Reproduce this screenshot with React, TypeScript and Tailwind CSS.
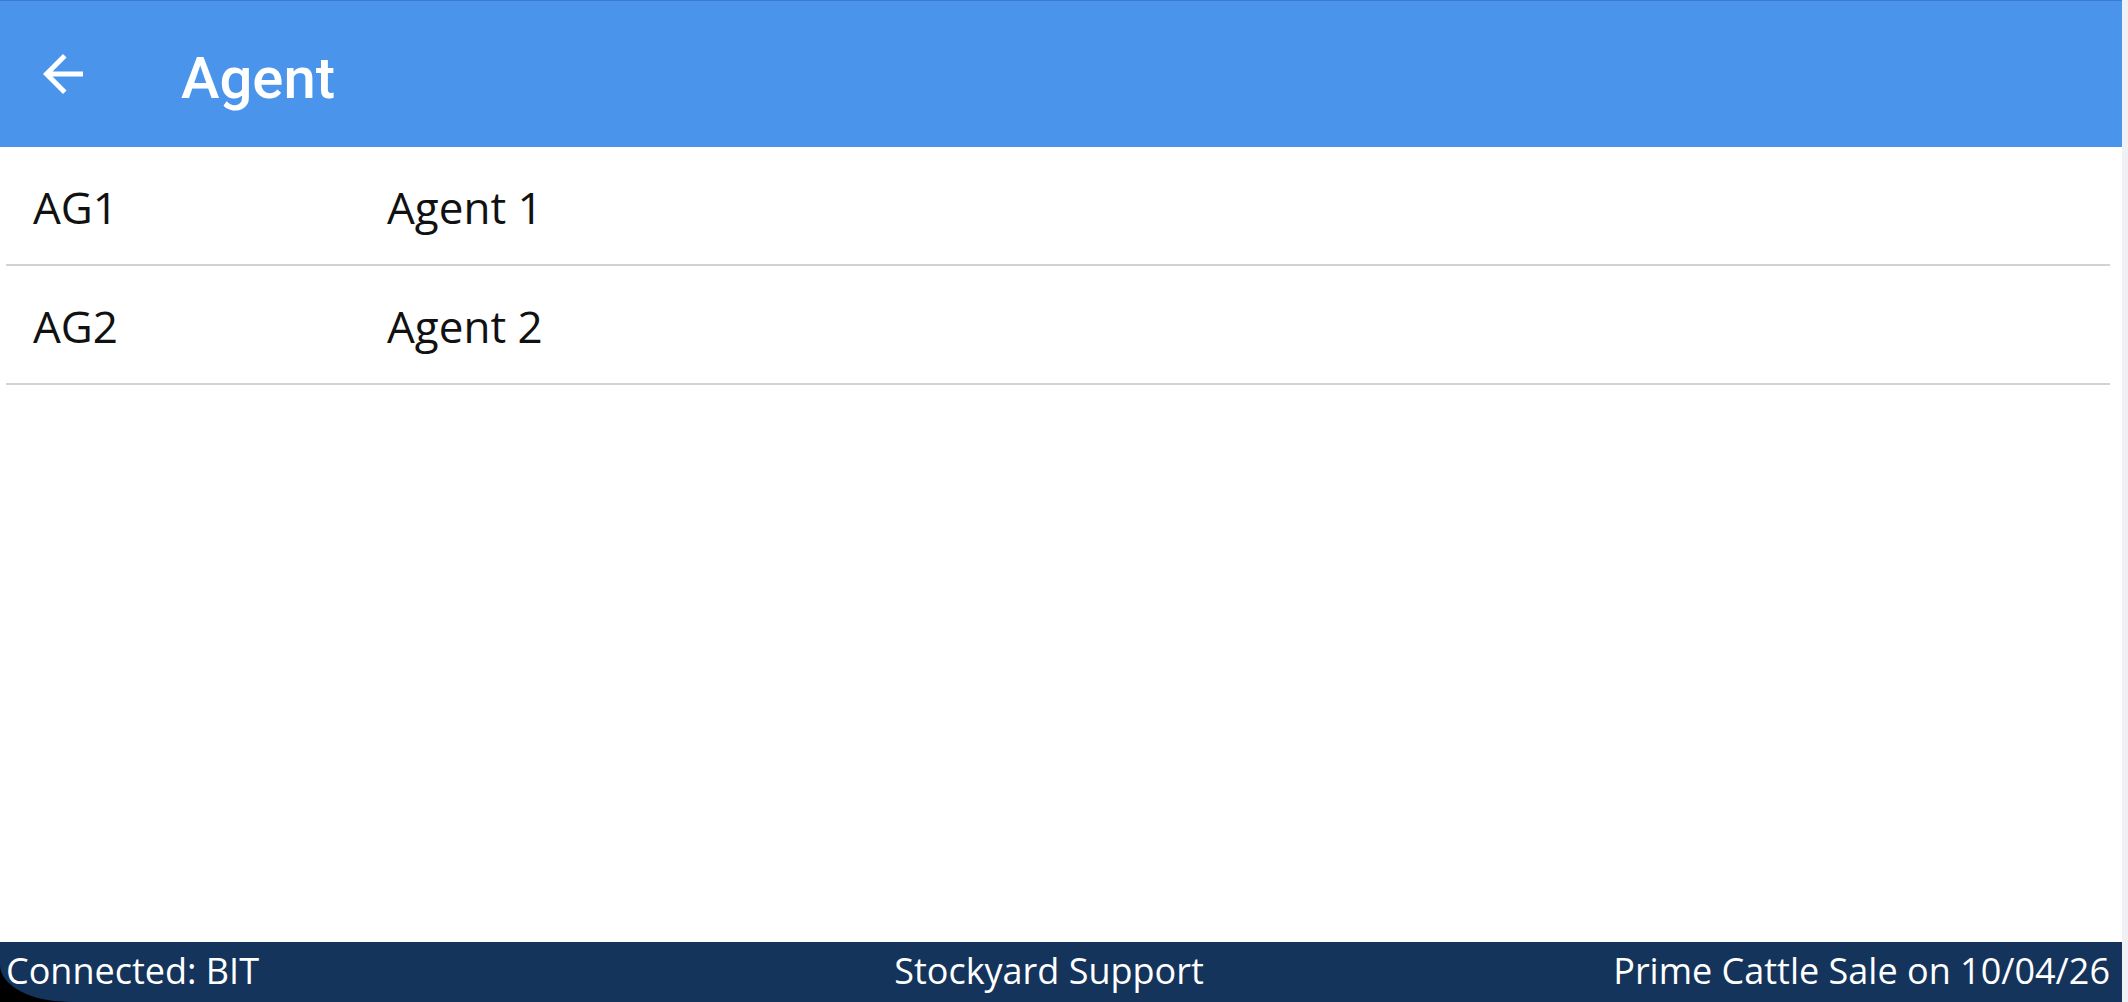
const agents = [
  { code: 'AG1', name: 'Agent 1' },
  { code: 'AG2', name: 'Agent 2' },
]

function BackArrow() {
  return (
    <svg width="60" height="60" viewBox="0 0 24 24" fill="white">
      <path d="M20 11H7.83l5.59-5.59L12 4l-8 8 8 8 1.41-1.41L7.83 13H20v-2z" />
    </svg>
  )
}

export default function App() {
  return (
    <div className="flex h-[1002px] w-full overflow-hidden bg-[#f0f1f4]">
      <div className="relative flex w-[2122px] flex-col bg-white">
        {/* header */}
        <header className="flex h-[147px] shrink-0 items-center border-t border-[#3b79d6] bg-[#4a95eb]">
          <button className="ml-[33px] flex items-center">
            <BackArrow />
          </button>
          <h1 className="ml-[88px] mt-[8px] font-['Roboto',sans-serif] text-[58px] font-medium leading-none text-white">
            Agent
          </h1>
        </header>

        {/* list */}
        <ul className="ml-[6px] mr-[12px] flex-1 font-['Open_Sans',sans-serif] text-[44px] text-[#111]">
          {agents.map((a) => (
            <li key={a.code} className="flex h-[119px] items-center border-b-2 border-[#d2d2d2] pt-[2px]">
              <span className="w-[381px] shrink-0 pl-[27px]">{a.code}</span>
              <span>{a.name}</span>
            </li>
          ))}
        </ul>

        {/* status bar */}
        <footer className="relative grid h-[60px] shrink-0 grid-cols-3 overflow-hidden bg-[#15345c] pl-[6px] pr-[12px] pt-[4px] font-['Open_Sans',sans-serif] text-[36px] leading-[49px] text-white">
          <span className="whitespace-nowrap">Connected: BIT</span>
          <span className="whitespace-nowrap pr-[18px] text-center">Stockyard Support</span>
          <span className="whitespace-nowrap text-right">Prime Cattle Sale on 10/04/26</span>
          <svg className="absolute bottom-0 left-0" width="70" height="37" viewBox="0 0 70 37">
            <path d="M0 0 A70 37 0 0 0 70 37 L0 37 Z" fill="black" />
          </svg>
        </footer>
      </div>
      <div className="flex-1" />
    </div>
  )
}
